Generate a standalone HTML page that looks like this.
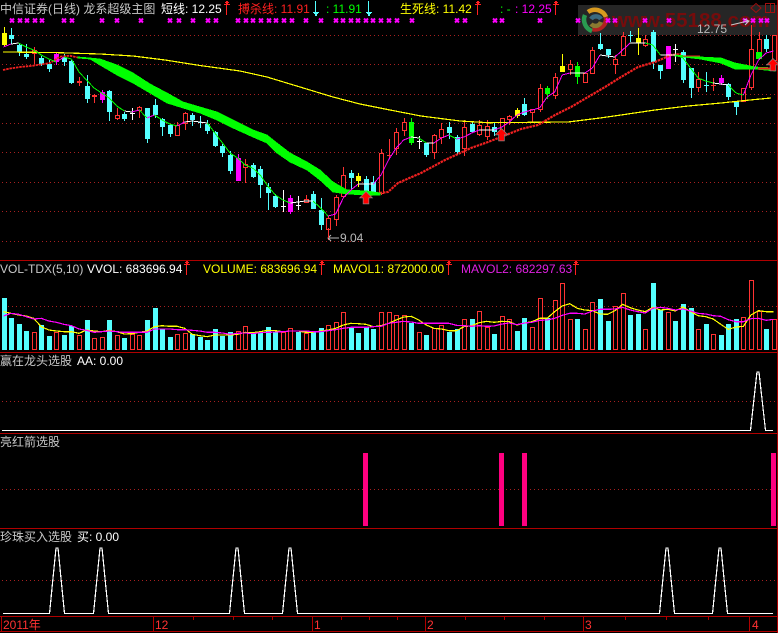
<!DOCTYPE html>
<html><head><meta charset="utf-8"><title>K</title>
<style>
html,body{margin:0;padding:0;background:#000;width:778px;height:633px;overflow:hidden}
svg{display:block;position:absolute;left:0;top:0}
text{font-family:"Liberation Sans","WenQuanYi Zen Hei","Noto Sans CJK SC",sans-serif;font-size:12px;white-space:pre}
</style></head><body>
<svg id="s" width="778" height="633" viewBox="0 0 778 633" xmlns="http://www.w3.org/2000/svg">
<rect width="778" height="633" fill="#000"/>
<rect x="578" y="5" width="199" height="30" fill="#262626"/>
<g fill="none" stroke-width="4.5">
<path d="M588 12A12 12 0 0 1 606 17" stroke="#d89a20"/>
<path d="M606 17A11 11 0 0 1 592 29" stroke="#b02020"/>
<path d="M592 31A12 12 0 0 1 585 15" stroke="#2a9a50"/>
<path d="M591 19A6 6 0 0 1 601 19" stroke="#3a6a80"/>
<path d="M601 22A6 6 0 0 1 591 24" stroke="#8a7a30"/>
</g>
<text x="612" y="27" style="font-size:20.5px;font-weight:bold" fill="#760c0c">www.55188.com</text>
<g id="g"></g>
<text x="0" y="13" fill="#c8c8c8">中信证券(日线) 龙系超级主图</text>
<text x="161" y="13" fill="#fff">短线: 12.25</text>
<text x="238" y="13" fill="#ff2020">搏杀线: 11.91</text>
<text x="326" y="13" fill="#00ff00">: 11.91</text>
<text x="400" y="13" fill="#ffff00">生死线: 11.42</text>
<text x="500" y="13" fill="#00ff00">: -</text>
<text x="515" y="13" fill="#ff00ff">: 12.25</text>
<text x="697" y="33" fill="#b8b8b8">12.75</text>
<text x="340" y="242" fill="#b8b8b8">9.04</text>
<text x="0" y="273" fill="#c8c8c8">VOL-TDX(5,10)</text>
<text x="87" y="273" fill="#fff">VVOL: 683696.94</text>
<text x="203" y="273" fill="#ffff00">VOLUME: 683696.94</text>
<text x="333" y="273" fill="#ffff00">MAVOL1: 872000.00</text>
<text x="461" y="273" fill="#e020e0">MAVOL2: 682297.63</text>
<text x="0" y="365" fill="#c8c8c8">赢在龙头选股</text>
<text x="77" y="365" fill="#fff">AA: 0.00</text>
<text x="0" y="446" fill="#c8c8c8">亮红箭选股</text>
<text x="0" y="541" fill="#c8c8c8">珍珠买入选股</text>
<text x="77" y="541" fill="#fff">买: 0.00</text>
<text x="3" y="629" fill="#ff3232">2011年</text>
<text x="155" y="629" fill="#ff3232">12</text>
<text x="314" y="629" fill="#ff3232">1</text>
<text x="427" y="629" fill="#ff3232">2</text>
<text x="585" y="629" fill="#ff3232">3</text>
<text x="752" y="629" fill="#ff3232">4</text>
</svg>
<script>
var h='';
var R='#ff3232',C='#54ffff',G='#00ff00',M='#ff00ff',Y='#ffff00',W='#ffffff';
function L(x1,y1,x2,y2,c,w){h+='<line x1="'+x1+'" y1="'+y1+'" x2="'+x2+'" y2="'+y2+'" stroke="'+c+'" stroke-width="'+(w||1)+'" shape-rendering="crispEdges"/>';}
function B(x,y,w,hh,c){h+='<rect x="'+x+'" y="'+y+'" width="'+w+'" height="'+hh+'" fill="'+c+'" shape-rendering="crispEdges"/>';}
function P(p,c,w,extra){h+='<polyline points="'+p.map(function(a){return a[0]+','+a[1]}).join(' ')+'" fill="none" stroke="'+c+'" stroke-width="'+(w||1)+'" '+(extra||'shape-rendering="crispEdges"')+'/>';}
function DOT(y,x0){h+='<line x1="'+(x0||2)+'" y1="'+(y+.5)+'" x2="777" y2="'+(y+.5)+'" stroke="#a82020" stroke-width="1" stroke-dasharray="1 3" shape-rendering="crispEdges"/>';}
[35,64,94,123,152,182,211,241,401,489,580].forEach(function(y){DOT(y)});DOT(306,8);
[260,352,433,528,616,631].forEach(function(y){B(0,y,778,1,'#b00000')});
B(777,0,1,633,'#b00000');
B(1,616,1,16,'#b00000');[153,312,425,583,749].forEach(function(x){B(x,616,1,16,'#b00000')});
[193,233,272,341,369,397,465,504,544,625,666,708].forEach(function(x){B(x,616,1,4,'#b00000')});
/* watermark icons */
h+='<path d="M756 3.5L761 8L756 12.5L751 8Z" fill="none" stroke="#a01010"/>';
B(765,3,1,10,'#a01010');B(765,3,10,1,'#a01010');B(774,3,1,10,'#a01010');B(765,12,10,1,'#a01010');B(770,3,1,10,'#a01010');
/* candles: hi,top,bot,lo,type */
var c=[[27,33,45,47,'y'],[28,35,39,44,'c'],[43,45,52,56,'c'],[44,54,57,59,'c'],[47,50,53,64,'r'],[56,58,64,66,'c'],[60,64,69,72,'c'],[52,54,62,65,'m'],[54,57,62,66,'c'],[60,61,83,84,'c'],[77,81,82,86,'r'],[75,86,99,103,'c'],[94,95,96,103,'r'],[90,92,100,103,'m'],[90,91,112,121,'c'],[108,115,118,120,'r'],[112,114,119,121,'c'],[108,113,113,120,'w'],[106,107,110,118,'r'],[108,108,139,143,'c'],[99,105,115,118,'c'],[118,119,127,136,'c'],[124,125,134,137,'c'],[122,125,135,135,'r'],[112,113,123,130,'r'],[113,115,120,126,'c'],[116,122,122,128,'c'],[120,124,131,134,'c'],[131,132,146,147,'c'],[144,146,153,157,'c'],[151,155,171,174,'c'],[154,158,181,181,'m'],[159,164,167,183,'r'],[163,165,177,178,'c'],[166,169,185,198,'c'],[183,187,193,210,'c'],[194,196,207,208,'c'],[190,206,206,212,'w'],[195,198,212,214,'m'],[196,205,205,210,'w'],[195,199,202,202,'r'],[191,194,209,209,'c'],[198,210,225,230,'c'],[216,218,229,240,'r'],[195,197,219,226,'r'],[167,175,196,198,'r'],[170,173,178,190,'c'],[173,176,181,187,'y'],[176,179,192,195,'c'],[176,182,193,195,'c'],[149,153,193,195,'r'],[139,155,155,158,'r'],[128,132,148,155,'r'],[118,122,130,136,'r'],[118,122,143,145,'g'],[136,141,141,149,'w'],[143,143,155,157,'c'],[134,135,152,159,'r'],[123,129,137,144,'r'],[122,127,133,139,'c'],[135,137,152,155,'c'],[120,127,148,156,'r'],[121,124,132,133,'c'],[120,125,134,136,'r'],[120,126,136,140,'r'],[123,127,132,136,'c'],[118,118,132,137,'r'],[115,116,119,125,'r'],[108,110,116,118,'y'],[98,104,115,116,'c'],[109,109,112,122,'r'],[84,88,109,112,'r'],[86,88,94,99,'g'],[73,77,95,99,'r'],[54,66,72,72,'y'],[60,64,69,75,'r'],[62,66,77,84,'g'],[72,73,82,83,'r'],[47,50,73,73,'r'],[33,44,49,50,'c'],[49,49,55,58,'c'],[55,59,64,74,'r'],[32,36,55,55,'r'],[31,35,35,42,'c'],[28,38,43,55,'y'],[35,39,45,47,'r'],[30,32,62,69,'c'],[65,65,71,79,'c'],[46,46,69,69,'m'],[44,49,49,62,'w'],[50,52,80,83,'c'],[68,68,88,98,'c'],[72,79,87,92,'r'],[72,85,85,92,'c'],[78,85,85,91,'r'],[75,78,83,85,'m'],[83,84,97,100,'c'],[102,102,107,115,'c'],[88,88,101,101,'r'],[25,49,87,90,'r'],[32,39,52,52,'r'],[35,39,49,52,'c'],[35,35,60,62,'r']];
var col={y:Y,c:C,m:M,g:G,w:W,r:R};
function X(i){return Math.round(3.5+7.55*i)}
c.forEach(function(a,i){var x=X(i),t=a[4],k=col[t];
 L(x+.5,a[0],x+.5,a[3],k);
 if(a[1]==a[2]){B(x-2,a[1],5,1,k)}
 else if(t=='r'){h+='<rect x="'+(x-1.5)+'" y="'+(a[1]+.5)+'" width="4" height="'+(a[2]-a[1])+'" fill="#000" stroke="'+k+'" stroke-width="1" shape-rendering="crispEdges"/>'}
 else B(x-2,a[1],5,a[2]-a[1],k);
});
B(756,52,6,7,G);L(759.5,59,759.5,60,G);
/* yellow MA */
P([[3,52],[53,52.5],[100,54],[133,56],[165,60],[200,65.5],[240,71],[267,77],[300,87],[333,97],[360,104],[390,110],[421,116],[460,121],[488,122.7],[568,122],[600,118],[621,115],[655,110],[688,106],[721,103],[750,100],[771,98]],Y,1.2);
/* red MA */
P([[3,70],[10,68.5],[20,67],[33,65.7],[50,63],[60,56.7],[70,55.7],[80,58]],'#f02020',1.8,'stroke-dasharray="2.5 .8"');
P([[370,195],[380,193],[388,192],[398,183],[421,173],[445,160],[471,148],[488,142],[501,137],[521,129],[538,125],[555,115],[571,107],[588,97],[605,87],[621,77],[638,67],[655,62],[671,55],[681,54]],'#f02020',2.2,'stroke-dasharray="2.5 .8"');
h+='<polygon points="78,57 90,58 100,59 117,65 133,73 150,84 167,93 183,102 200,107 217,112 233,120 253,130 267,135 277,143 290,153 307,162 320,170 333,182 347,190 367,191 380,193 380,195 367,195 347,194 333,192 320,180 307,170 290,162 277,153 267,143 253,137 233,128 217,120 200,113 183,108 167,103 150,93 133,83 117,75 100,65 90,59 78,58" fill="#00ff00" stroke="#00ff00" stroke-width=".8" shape-rendering="crispEdges"/>';
h+='<polygon points="675,55 700,57 721,58 735,63 755,67 775,68 775,71 755,69 735,69 721,63 700,59 675,56" fill="#00ff00" stroke="#00ff00" stroke-width=".8" shape-rendering="crispEdges"/>';
L(683,56,700,56,'#ee2020');L(758,68.5,773,68.5,'#ee2020',2);
/* thin line */
var t=[47,44,43,47,50,55,59,62,57,59,72,80,88,93,98,106,111,112,110,118,115,120,124,126,122,121,122,123,133,143,153,158,165,168,175,186,195,200,203,202,201,201,208,216,214,198,190,184,184,184,175,160,148,140,137,138,143,143,138,135,139,137,133,130,130,130,127,122,115,112,110,108,97,92,75,73,73,73,68,55,56,57,50,43,43,43,45,55,55,55,58,68,78,81,83,84,85,93,95,75,60,53,51];
for(var i=0;i<t.length-1;i++){var d=t[i+1]-t[i],k=d>1.5?G:(d<-1.5?M:W);
 h+='<line x1="'+(3.5+7.55*i)+'" y1="'+t[i]+'" x2="'+(3.5+7.55*(i+1))+'" y2="'+t[i+1]+'" stroke="'+k+'" stroke-width="1" shape-rendering="crispEdges"/>';}
/* x marks */
var xs=[12,20,27,35,42,64,72,102,117,141,170,179,193,208,216,238,246,253,261,269,276,284,292,306,321,336,343,351,358,366,373,381,389,397,412,457,465,495,502,540,578,608,615,645,669,745,753,761,767];
xs.forEach(function(x){h+='<path d="M'+(x-2)+' 18.5L'+(x+2)+' 22.5M'+(x+2)+' 18.5L'+(x-2)+' 22.5" stroke="#ff00ff" stroke-width="2" fill="none"/>'});
/* small arrows */
function UP(x,y0,y1,k){L(x+.5,y0,x+.5,y1,k);B(x-1,y0+1,4,1,k);B(x-2,y0+3,6,1,k);B(x,y0,2,4,k);}
function DN(x,y0,y1,k){L(x+.5,y0,x+.5,y1,k);B(x-2,y1-3,6,1,k);B(x-1,y1-2,4,1,k);B(x,y1-1,2,2,k);}
UP(226,1,15,'#ff2020');DN(315,1,15,C);DN(368,1,15,C);UP(477,1,15,'#ff2020');UP(555,1,15,'#ff2020');
UP(186,261,275,'#ff2020');UP(321,261,275,'#ff2020');UP(448,261,275,'#ff2020');UP(575,261,275,'#ff2020');
/* big arrows */
function BIG(x,y){var s='M'+x+' '+y+'l5.5 5.5h-3v6h-5v-6h-3z';h+='<path d="'+s+'" fill="#f00" stroke="#888" stroke-width="1.4" paint-order="stroke"/>';}
BIG(366,192);BIG(501.5,129);BIG(773,59);
/* labels arrows */
L(328,238,339,238,'#b8b8b8');h+='<path d="M331 235L328 238L331 241" fill="none" stroke="#b8b8b8"/>';L(328.5,228,328.5,238,R);
h+='<path d="M731 25L748 21M744 19L749 21L745 25" fill="none" stroke="#c8c8c8"/>';
/* volume */
var vz=[128,188,207,228,232,210,243,230,240,213,240,195,250,246,195,240,248,238,240,195,158,223,246,237,234,238,245,255,222,242,231,229,213,235,232,216,232,232,220,230,235,232,218,211,201,171,218,233,215,222,171,171,180,180,203,232,240,220,210,230,222,192,192,168,216,237,183,192,228,189,216,129,189,135,84,192,192,222,141,132,198,153,114,180,177,222,84,165,171,198,147,159,222,207,237,240,207,192,186,75,168,222,193];
var vt={};'4 7 10 12 13 15 17 18 23 24 31 32 37 38 40 43 44 45 50 51 52 53 55 57 58 61 63 64 66 67 70 71 73 74 75 77 78 81 82 85 88 92 94 98 99 100 102'.split(' ').forEach(function(n){vt[n]=1});
vz.forEach(function(z,i){var x=X(i),y=Math.round(255+z/3);
 if(vt[i]){h+='<rect x="'+(x-1.5)+'" y="'+(y+.5)+'" width="4" height="'+(349-y)+'" fill="#000" stroke="'+R+'" shape-rendering="crispEdges"/>'}
 else B(x-2,y,5,350-y,C);});
var vy=[170,175,180,183,190,215,225,228,230,230,235,225,228,230,226,230,237,236,232,228,215,212,214,214,220,238,242,245,240,240,240,238,232,233,230,226,227,230,228,228,232,232,228,225,220,210,205,206,208,215,212,205,195,186,184,195,210,220,222,227,227,215,212,203,199,202,199,200,210,204,200,190,190,170,153,146,160,165,167,177,178,167,148,158,165,170,157,165,163,168,156,170,182,185,192,208,223,216,214,180,167,170,170];
var vm=[183,175,178,185,192,190,198,202,208,212,222,226,232,230,228,230,232,232,232,232,222,222,222,224,224,226,228,232,232,234,238,235,234,236,233,232,231,230,228,228,228,230,230,227,224,220,217,217,217,215,214,205,202,199,201,205,205,205,205,205,211,212,214,212,214,213,207,204,209,204,202,196,195,190,181,175,175,177,168,163,163,162,157,165,170,174,160,157,160,165,162,168,175,177,182,184,194,200,200,191,190,196,193];
P(vy.map(function(z,i){return[3.5+7.55*i,255+z/3]}),Y,1.2);
P(vm.map(function(z,i){return[3.5+7.55*i,255+z/3]}),M,1.2);
/* peak panels */
function PK(cx,b,tp){return [[cx-7.5,b],[cx-1,tp],[cx+1,tp],[cx+7.5,b]]}
var p3=[[2,430.5]].concat(PK(758,430.5,372)).concat([[773,430.5]]);P(p3,W,1.2);
var p5=[[3,613.5]];[57,101,237,290,667,720].forEach(function(x){p5=p5.concat(PK(x,613.5,548))});p5.push([773,613.5]);P(p5,W,1.2);
[363,499,522,771].forEach(function(x){B(x,453,5,73,'#ff0080')});
document.getElementById('g').innerHTML=h;
</script>
</body></html>
